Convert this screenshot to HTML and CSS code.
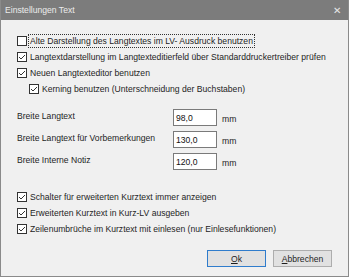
FILE: index.html
```html
<!DOCTYPE html>
<html lang="de">
  <head>
    <meta charset="UTF-8" />
    <title>Einstellungen Text</title>
    <link rel="stylesheet" href="styles.css">
  </head>
  <body>
    <div class="window">
      <div class="titlebar">
        <span>Einstellungen Text</span>
        <span class="close">&#x2715;</span>
      </div>

      <div class="content">
        <div class="checks">
          <label class="check">
            <span class="box"></span>
            <span class="text focus">Alte Darstellung des Langtextes im LV- Ausdruck benutzen</span>
          </label>
          <label class="check">
            <span class="box checked"><svg viewBox="0 0 8 8"><path d="M1 4 L3 6 L7 2" /></svg></span>
            <span class="text">Langtextdarstellung im Langtexteditierfeld über Standarddruckertreiber prüfen</span>
          </label>
          <label class="check">
            <span class="box checked"><svg viewBox="0 0 8 8"><path d="M1 4 L3 6 L7 2" /></svg></span>
            <span class="text">Neuen Langtexteditor benutzen</span>
          </label>
          <label class="check indent">
            <span class="box checked"><svg viewBox="0 0 8 8"><path d="M1 4 L3 6 L7 2" /></svg></span>
            <span class="text">Kerning benutzen (Unterschneidung der Buchstaben)</span>
          </label>
        </div>

        <div class="fields">
          <span class="field-label">Breite Langtext</span>
          <span class="input">98,0</span>
          <span class="unit">mm</span>

          <span class="field-label">Breite Langtext für Vorbemerkungen</span>
          <span class="input">130,0</span>
          <span class="unit">mm</span>

          <span class="field-label">Breite Interne Notiz</span>
          <span class="input">120,0</span>
          <span class="unit">mm</span>
        </div>

        <div class="checks lower">
          <label class="check">
            <span class="box checked"><svg viewBox="0 0 8 8"><path d="M1 4 L3 6 L7 2" /></svg></span>
            <span class="text">Schalter für erweiterten Kurztext immer anzeigen</span>
          </label>
          <label class="check">
            <span class="box checked"><svg viewBox="0 0 8 8"><path d="M1 4 L3 6 L7 2" /></svg></span>
            <span class="text">Erweiterten Kurztext in Kurz-LV ausgeben</span>
          </label>
          <label class="check">
            <span class="box checked"><svg viewBox="0 0 8 8"><path d="M1 4 L3 6 L7 2" /></svg></span>
            <span class="text">Zeilenumbrüche im Kurztext mit einlesen (nur Einlesefunktionen)</span>
          </label>
        </div>

        <div class="buttons">
          <button type="button" class="default-button"><u>O</u>k</button>
          <button type="button"><u>A</u>bbrechen</button>
        </div>
      </div>
    </div>
  </body>
</html>
```

FILE: styles.css
```css
body {
  margin: 0;
  background-color: #fff;
  font-family: "Liberation Sans", Arial, sans-serif;
  font-size: 8.6px;
  color: #1e1e1e;
}
.window {
  width: 349px;
  height: 277px;
  box-sizing: border-box;
  background-color: #f0f0f0;
  border: 1px solid #8a8a8a;
  border-top: none;
}
.titlebar {
  height: 20px;
  background-color: #7c7c7c;
  color: #ececec;
  display: flex;
  justify-content: space-between;
  align-items: center;
  padding: 0 7px 0 4px;
  font-size: 8.6px;
}
.close {
  font-size: 10px;
  color: #e6e6e6;
}
.content {
  padding: 13px 16px 0 16px;
}
.check {
  display: flex;
  align-items: center;
  height: 16px;
}
.indent {
  padding-left: 12px;
}
.box {
  width: 10px;
  height: 10px;
  box-sizing: border-box;
  border: 1px solid #333;
  background-color: #fff;
  display: flex;
}
.box svg {
  width: 8px;
  height: 8px;
  fill: none;
  stroke: #333;
  stroke-width: 1;
}
.text {
  margin-left: 1px;
  padding: 1px 1px;
  border: 1px solid transparent;
}
.focus {
  border: 1px dotted #333;
}
.fields {
  display: grid;
  grid-template-columns: 151px 44px auto;
  column-gap: 5px;
  row-gap: 5px;
  align-items: center;
  margin-top: 12px;
}
.field-label {
  margin-top: -4px;
}
.input {
  height: 17px;
  box-sizing: border-box;
  border: 1px solid #7a7a7a;
  background-color: #fff;
  padding: 3px 2px 0 2px;
  color: #111;
}
.unit {
  padding-top: 2px;
}
.lower {
  margin-top: 19px;
}
.buttons {
  display: flex;
  justify-content: flex-end;
  gap: 7px;
  margin-top: 13px;
}
button {
  width: 59px;
  height: 17px;
  padding: 0;
  background-color: #e1e1e1;
  border: 1px solid #adadad;
  font-family: "Liberation Sans", Arial, sans-serif;
  font-size: 8.6px;
  color: #1e1e1e;
}
.default-button {
  border-color: #2f7ccc;
}
```
